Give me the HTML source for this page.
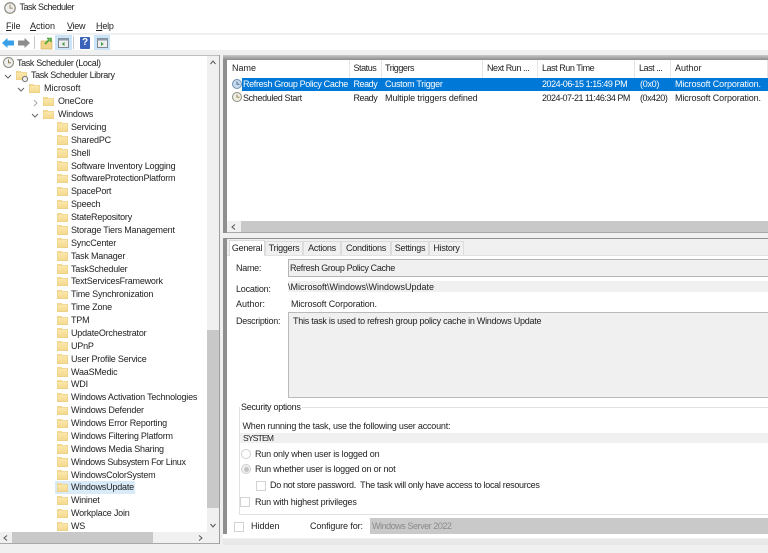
<!DOCTYPE html>
<html><head><meta charset="utf-8"><title>Task Scheduler</title>
<style>
html,body{margin:0;padding:0;background:#fff}
body{width:768px;height:553px;overflow:hidden;position:relative;font:9px/12px "Liberation Sans",sans-serif;color:#222;filter:blur(.3px)}
.b{position:absolute}
.t{position:absolute;white-space:nowrap;line-height:12px}
.a{letter-spacing:-.2px}.c{letter-spacing:-.35px}.d{letter-spacing:-.45px}.e{letter-spacing:-.28px}.g{letter-spacing:-.12px}
#tree{position:absolute;left:0;top:56.6px;width:207px;height:475.4px;overflow:hidden;letter-spacing:-.2px}
#tree div{position:relative;height:12.89px;line-height:12.89px;white-space:nowrap;padding-left:71px}
#tree div.f:before{content:"";position:absolute;left:57px;top:2.5px;width:11px;height:8.5px;background:linear-gradient(#fbe9ae,#f4d88c);box-shadow:inset 0 0 0 .5px #e6cb80}
#tree div.f:after{content:"";position:absolute;left:57px;top:1.5px;width:5px;height:1.5px;background:#f2d892}
#tree div.l3:before,#tree div.l3:after{left:43px}
#tree div.l2:before,#tree div.l2:after{left:29px}
#tree div.l1:before,#tree div.l1:after{left:16px}
#tree .l3{padding-left:58px}#tree .l2{padding-left:44px;letter-spacing:0}#tree .l1{padding-left:31px;letter-spacing:-.36px}#tree .l0{padding-left:17px;letter-spacing:-.36px}
#tree .sel{background:linear-gradient(#d9ebf9,#d9ebf9) no-repeat 55px 0/80px 13px}
.sep{position:absolute;top:60px;height:18px;width:1px;background:#e6e6e6}
.tab{position:absolute;top:241px;height:14px;background:#f0f0f0;border:1px solid #dcdcdc;border-bottom:0;box-sizing:border-box;text-align:center;line-height:13px;white-space:nowrap;letter-spacing:-.25px}
.rd{position:absolute;width:8px;height:8px;border:1px solid #d0d0d0;border-radius:50%;background:#fff}
.ck{position:absolute;width:8px;height:8px;border:1px solid #d2d2d2;background:#fff}
svg{position:absolute;overflow:visible}
</style></head><body>

<!-- title -->
<svg style="left:4px;top:2px" width="12" height="12" viewBox="0 0 13 13"><circle cx="6.500" cy="6.500" r="5.700" fill="#eee" stroke="#8a8a7c" stroke-width="1.300"/><path d="M6.500 3v3.700H9.500" fill="none" stroke="#8f7f4f" stroke-width="1"/></svg>
<span class="t" style="left:19.500px;top:1px;letter-spacing:-.5px">Task Scheduler</span>
<span class="t" style="left:6px;top:20px"><u>F</u>ile</span>
<span class="t" style="left:30px;top:20px"><u>A</u>ction</span>
<span class="t" style="left:67px;top:20px;letter-spacing:-.3px"><u>V</u>iew</span>
<span class="t" style="left:96px;top:20px;letter-spacing:-.2px"><u>H</u>elp</span>

<div class="b" style="left:0;top:33px;width:768px;height:2px;background:#f0f0f0"></div>
<div class="b" style="left:0;top:50px;width:768px;height:5px;background:#f0f0f0"></div>

<!-- toolbar -->
<svg style="left:2px;top:37px" width="12" height="12" viewBox="0 0 12 12"><path d="M0 6L5.500 1V3.500H12V8.500H5.500V11Z" fill="#39a0e8"/></svg>
<svg style="left:18px;top:37px" width="12" height="12" viewBox="0 0 12 12"><path d="M12 6L6.500 1V3.500H0V8.500H6.500V11Z" fill="#8d8d8d"/></svg>
<div class="b" style="left:34px;top:36px;width:1px;height:13px;background:#c8c8c8"></div>
<svg style="left:41px;top:37px" width="12" height="12" viewBox="0 0 12 12"><path d="M0 4H11V12H0Z" fill="#f1d487" stroke="#d8b767" stroke-width=".7"/><path d="M4 7L8.500 2.500M6 1.500H10V5" fill="none" stroke="#4fa63c" stroke-width="1.600"/></svg>
<div class="b" style="left:55px;top:35px;width:17px;height:15px;background:#cce4f7"></div>
<svg style="left:58px;top:38px" width="11" height="10" viewBox="0 0 11 10"><rect x=".5" y=".5" width="10" height="9" fill="#eee" stroke="#7d8a94"/><rect x=".5" y=".5" width="10" height="2" fill="#8b9aa6"/><path d="M6.500 4V8L3.800 6Z" fill="#3f9a3f"/></svg>
<div class="b" style="left:73px;top:36px;width:1px;height:13px;background:#c8c8c8"></div>
<div class="b" style="left:80px;top:37px;width:10px;height:12px;background:#3a62b8;border-radius:1px"></div>
<span class="t" style="left:82px;top:37px;color:#fff;font-weight:bold;font-size:10px">?</span>
<div class="b" style="left:94px;top:35px;width:16px;height:15px;background:#cce4f7"></div>
<svg style="left:97px;top:38px" width="11" height="10" viewBox="0 0 11 10"><rect x=".5" y=".5" width="10" height="9" fill="#eee" stroke="#7d8a94"/><rect x=".5" y=".5" width="10" height="2" fill="#8b9aa6"/><path d="M4 4V8L6.700 6Z" fill="#3f9a3f"/></svg>

<!-- tree panel -->
<div id="tree">
<div class="l0">Task Scheduler (Local)</div>
<div class="f l1">Task Scheduler Library</div>
<div class="f l2">Microsoft</div>
<div class="f l3">OneCore</div>
<div class="f l3">Windows</div>
<div class="f">Servicing</div>
<div class="f">SharedPC</div>
<div class="f">Shell</div>
<div class="f">Software Inventory Logging</div>
<div class="f">SoftwareProtectionPlatform</div>
<div class="f">SpacePort</div>
<div class="f">Speech</div>
<div class="f">StateRepository</div>
<div class="f">Storage Tiers Management</div>
<div class="f">SyncCenter</div>
<div class="f">Task Manager</div>
<div class="f">TaskScheduler</div>
<div class="f">TextServicesFramework</div>
<div class="f">Time Synchronization</div>
<div class="f">Time Zone</div>
<div class="f">TPM</div>
<div class="f">UpdateOrchestrator</div>
<div class="f">UPnP</div>
<div class="f">User Profile Service</div>
<div class="f">WaaSMedic</div>
<div class="f">WDI</div>
<div class="f">Windows Activation Technologies</div>
<div class="f">Windows Defender</div>
<div class="f">Windows Error Reporting</div>
<div class="f">Windows Filtering Platform</div>
<div class="f">Windows Media Sharing</div>
<div class="f" style="letter-spacing:-.33px">Windows Subsystem For Linux</div>
<div class="f">WindowsColorSystem</div>
<div class="f sel">WindowsUpdate</div>
<div class="f">Wininet</div>
<div class="f">Workplace Join</div>
<div class="f">WS</div>
</div>
<svg style="left:3px;top:57px" width="11" height="11" viewBox="0 0 11 11"><circle cx="5.500" cy="5.500" r="5" fill="#eee" stroke="#8a8a7c"/><path d="M5.500 2.500v3.200H8" fill="none" stroke="#8f7f4f"/></svg>
<svg style="left:22px;top:76px" width="6" height="6" viewBox="0 0 6 6"><circle cx="3" cy="3" r="2.600" fill="#eee" stroke="#777"/></svg>
<svg style="left:4px;top:73px" width="40" height="50" viewBox="0 0 40 50" fill="none" stroke="#666" stroke-width="1"><path d="M1 2L4 5L7 2M14 15L17 18L20 15M28 41L31 44L34 41"/><path d="M30 27L33 30L30 33" stroke="#aaa"/></svg>

<!-- tree scrollbars -->
<div class="b" style="left:207px;top:56px;width:12px;height:476px;background:#f0f0f0"></div>
<div class="b" style="left:207px;top:330px;width:12px;height:178px;background:#c8c8c8"></div>
<svg style="left:210px;top:60px" width="6" height="5" viewBox="0 0 6 5" fill="none" stroke="#555"><path d="M.5 4L3 1L5.500 4"/></svg>
<svg style="left:210px;top:523px" width="6" height="5" viewBox="0 0 6 5" fill="none" stroke="#555"><path d="M.5 1L3 4L5.500 1"/></svg>
<div class="b" style="left:0;top:532px;width:219px;height:11px;background:#f0f0f0"></div>
<div class="b" style="left:12px;top:532px;width:141px;height:11px;background:#c8c8c8"></div>
<svg style="left:3px;top:535px" width="5" height="6" viewBox="0 0 5 6" fill="none" stroke="#555"><path d="M4 .5L1 3L4 5.500"/></svg>
<svg style="left:198px;top:535px" width="5" height="6" viewBox="0 0 5 6" fill="none" stroke="#555"><path d="M1 .5L4 3L1 5.500"/></svg>

<div class="b" style="left:0;top:55px;width:219px;height:1px;background:#bdbdbd"></div>
<div class="b" style="left:0;top:543px;width:220px;height:1px;background:#a8a8a8"></div>
<div class="b" style="left:0;top:544px;width:768px;height:9px;background:#f0f0f0"></div>
<div class="b" style="left:219px;top:55px;width:4px;height:498px;background:#f0f0f0"></div>
<div class="b" style="left:219px;top:55px;width:1px;height:489px;background:#9e9e9e"></div>
<div class="b" style="left:223px;top:55px;width:4px;height:479px;background:#8f8f8f"></div>
<div class="b" style="left:223px;top:50px;width:545px;height:5px;background:#f0f0f0"></div>
<div class="b" style="left:223px;top:55px;width:545px;height:5px;background:linear-gradient(#c8c8c8,#8c8c8c)"></div>

<!-- list header -->
<i class="sep" style="left:349px"></i><i class="sep" style="left:381px"></i><i class="sep" style="left:482px"></i><i class="sep" style="left:537px"></i><i class="sep" style="left:634px"></i><i class="sep" style="left:670px"></i><i class="sep" style="left:767px"></i>
<span class="t" style="left:232px;top:62px">Name</span>
<span class="t d" style="left:353.500px;top:62px">Status</span>
<span class="t d" style="left:385px;top:62px">Triggers</span>
<span class="t d" style="left:487px;top:62px">Next Run ...</span>
<span class="t d" style="left:542px;top:62px">Last Run Time</span>
<span class="t d" style="left:639px;top:62px">Last ...</span>
<span class="t" style="left:675px;top:62px">Author</span>

<!-- rows -->
<div class="b" style="left:242px;top:78px;width:526px;height:13px;background:#0078d7"></div>
<svg style="left:232px;top:79px" width="10" height="10" viewBox="0 0 10 10"><circle cx="5" cy="5" r="4.500" fill="#c6d9ec" stroke="#6f8fb0"/><path d="M5 2.500v2.800H7.500" fill="none" stroke="#4f6f94"/></svg>
<svg style="left:232px;top:92px" width="10" height="10" viewBox="0 0 10 10"><circle cx="5" cy="5" r="4.500" fill="#efefe8" stroke="#8d8d80"/><path d="M5 2.500v2.800H7.500" fill="none" stroke="#a08a50"/></svg>
<span class="t c" style="left:243px;top:78px;color:#fff">Refresh Group Policy Cache</span>
<span class="t d" style="left:353.500px;top:78px;color:#fff">Ready</span>
<span class="t e" style="left:385px;top:78px;color:#fff">Custom Trigger</span>
<span class="t d" style="left:542px;top:78px;color:#fff">2024-06-15 1:15:49 PM</span>
<span class="t e" style="left:640px;top:78px;color:#fff">(0x0)</span>
<span class="t g" style="left:675px;top:78px;color:#fff">Microsoft Corporation.</span>
<span class="t c" style="left:243px;top:92px">Scheduled Start</span>
<span class="t d" style="left:353.500px;top:92px">Ready</span>
<span class="t g" style="left:385px;top:92px">Multiple triggers defined</span>
<span class="t d" style="left:542px;top:92px;letter-spacing:-.5px">2024-07-21 11:46:34 PM</span>
<span class="t d" style="left:640px;top:92px">(0x420)</span>
<span class="t g" style="left:675px;top:92px">Microsoft Corporation.</span>

<!-- list h scrollbar -->
<div class="b" style="left:227px;top:221px;width:541px;height:11px;background:#f0f0f0"></div>
<div class="b" style="left:241px;top:221px;width:527px;height:11px;background:#c8c8c8"></div>
<svg style="left:231px;top:224px" width="5" height="6" viewBox="0 0 5 6" fill="none" stroke="#555"><path d="M4 .5L1 3L4 5.500"/></svg>
<div class="b" style="left:227px;top:232px;width:541px;height:1px;background:#a8a8a8"></div>
<div class="b" style="left:223px;top:233px;width:545px;height:5px;background:#f0f0f0"></div>
<div class="b" style="left:223px;top:238px;width:545px;height:1px;background:#8f8f8f"></div>

<!-- tab strip -->
<div class="b" style="left:227px;top:239px;width:541px;height:16px;background:#f0f0f0"></div>
<div class="b" style="left:227px;top:255px;width:541px;height:1px;background:#e2e2e2"></div>
<div class="tab" style="left:229px;top:240px;width:36px;height:16px;background:#fff;line-height:14px">General</div>
<div class="tab" style="left:265px;width:38px">Triggers</div>
<div class="tab" style="left:303px;width:38px">Actions</div>
<div class="tab" style="left:341px;width:50px">Conditions</div>
<div class="tab" style="left:391px;width:38px">Settings</div>
<div class="tab" style="left:429px;width:35px">History</div>

<!-- fields -->
<span class="t e" style="left:236px;top:262px">Name:</span>
<div class="b" style="left:288px;top:259px;width:480px;height:16px;background:#f0f0f0;border:solid #b4b4b4;border-width:1px 0 1px 1px"></div>
<span class="t c" style="left:290px;top:262px">Refresh Group Policy Cache</span>
<span class="t a" style="left:236px;top:283px">Location:</span>
<div class="b" style="left:288px;top:281px;width:480px;height:11px;background:#f0f0f0"></div>
<span class="t" style="left:288px;top:281px">\Microsoft\Windows\WindowsUpdate</span>
<span class="t" style="left:236px;top:298px">Author:</span>
<span class="t g" style="left:291px;top:298px">Microsoft Corporation.</span>
<span class="t e" style="left:236px;top:315px">Description:</span>
<div class="b" style="left:288px;top:312px;width:480px;height:84px;background:#f0f0f0;border:solid #bababa;border-width:1px 0 1px 1px"></div>
<span class="t" style="left:293px;top:315px;letter-spacing:-.26px">This task is used to refresh group policy cache in Windows Update</span>

<!-- security -->
<div class="b" style="left:239px;top:407px;width:529px;height:106px;border:solid #e2e2e2;border-width:1px 0 1px 1px"></div>
<span class="t e" style="left:240px;top:401px;background:#fff;padding:0 1px">Security options</span>
<span class="t a" style="left:242.500px;top:419.500px">When running the task, use the following user account:</span>
<div class="b" style="left:240px;top:433px;width:528px;height:10px;background:#f0f0f0"></div>
<span class="t" style="left:243px;top:432px;font-size:8.500px;letter-spacing:-.8px">SYSTEM</span>
<div class="rd" style="left:241px;top:449px"></div>
<span class="t a" style="left:255px;top:448px">Run only when user is logged on</span>
<div class="rd" style="left:241px;top:464px;background:#f0f0f0"></div>
<div class="b" style="left:243.500px;top:466.500px;width:5px;height:5px;border-radius:50%;background:#c4c4c4"></div>
<span class="t a" style="left:255px;top:463px">Run whether user is logged on or not</span>
<div class="ck" style="left:256px;top:481px"></div>
<span class="t" style="left:270px;top:479px;letter-spacing:-.3px">Do not store password.&nbsp; The task will only have access to local resources</span>
<div class="ck" style="left:240px;top:497px"></div>
<span class="t a" style="left:255px;top:496px">Run with highest privileges</span>
<div class="ck" style="left:234px;top:522px"></div>
<span class="t" style="left:251px;top:520px">Hidden</span>
<span class="t g" style="left:310px;top:520px">Configure for:</span>
<div class="b" style="left:370px;top:518px;width:398px;height:16px;background:#c9c9c9"></div>
<span class="t d" style="left:372px;top:520px;color:#8a8a8a">Windows Server 2022</span>

<div class="b" style="left:223px;top:534px;width:545px;height:19px;background:#fff"></div>
<div class="b" style="left:223px;top:538px;width:545px;height:15px;background:#f0f0f0"></div>
<div class="b" style="left:223px;top:539px;width:545px;height:6px;background:#e8e8e8"></div>
</body></html>
